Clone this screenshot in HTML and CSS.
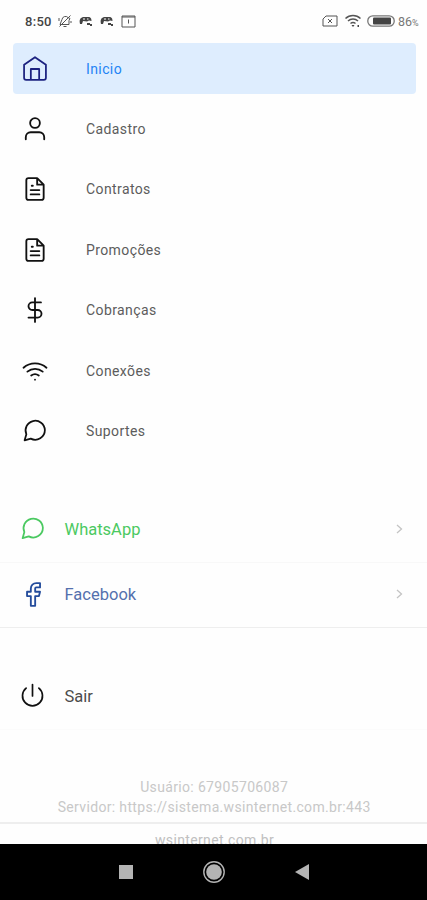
FILE: index.html
```
<!DOCTYPE html>
<html lang="pt-BR">
<head>
<meta charset="utf-8">
<title>Menu</title>
<link rel="stylesheet" href="styles.css">
</head>
<body>
<svg class="defs" width="0" height="0">
<symbol id="file" viewBox="0 0 24 24"><path d="M14 2H6a2 2 0 0 0-2 2v16a2 2 0 0 0 2 2h12a2 2 0 0 0 2-2V8z M14 2v6h6 M16 13H8 M16 17H8 M10 9H9"/></symbol>
<symbol id="chat" viewBox="0 0 24 24"><path d="M21.500 11.500a9.300 9.300 0 0 1-13.600 8.300L2 21.500l1.700-5.800A9.300 9.300 0 1 1 21.500 11.500z"/></symbol>
<symbol id="pad" viewBox="0 0 14 12"><path class="solid" d="M1 9C0 5 1 3 4 2h5c3 0 3.500 2 3.500 4l-2.500-.5-2 1-4-.5-1 3z"/><path class="eye" d="M4 4h2M8 4h1.500"/><path class="solid" d="M8 8h3v2H8zM11 9h2v2h-2z"/></symbol>
</svg>
<div class="screen">
  <header class="status">
    <span class="clock">8:50</span>
    <svg class="s-bell" viewBox="0 0 14 14"><path d="M2 10.500l2-5a3.500 3.500 0 0 1 6-2l2 1-1 2v4zM5.500 12.500h3M1.500 12.500l11-11M1 4v3M13 7v2"/></svg>
    <svg class="s-pad"><use href="#pad"/></svg>
    <svg class="s-pad"><use href="#pad"/></svg>
    <svg class="s-cal" viewBox="0 0 15 13"><path d="M1 1h13v11H1zM1 2h13M7.500 4.500v4"/></svg>
    <span class="grow"></span>
    <svg class="s-sim" viewBox="0 0 16 12"><path d="M4 1h11v10H1V4zM6 4l4 4M10 4L6 8"/></svg>
    <svg class="s-wifi" viewBox="0 0 18 14"><path d="M1.500 4.500a11 11 0 0 1 15 0M4 7a7.500 7.500 0 0 1 10 0M6.500 9.500a4 4 0 0 1 5 0"/><path class="solid" d="M7.500 11h3L9 13zM13.500 11h1.500v2h-1.500z"/></svg>
    <svg class="s-bat" viewBox="0 0 28 12"><rect x=".8" y=".8" width="26.400" height="10.400" rx="5"/><rect class="solid" x="6" y="2.500" width="18" height="7" rx="1"/></svg>
    <span class="pct">86<small>%</small></span>
  </header>
  <nav class="menu">
    <a class="item active"><svg class="icon" viewBox="-.5 0 25 25"><path d="M1.500 8.500L12 1.200 22.500 8.500V21a2 2 0 0 1-2 2h-17a2 2 0 0 1-2-2zM8 23V12.500h8V23"/></svg><span>Inicio</span></a>
    <a class="item"><svg class="icon" viewBox="0 0 24 24"><path d="M20.500 21.500V19.500a4.500 4.500 0 0 0-4.500-4.500H8a4.500 4.500 0 0 0-4.500 4.500V21.500"/><circle cx="12" cy="6.500" r="4.500"/></svg><span>Cadastro</span></a>
    <a class="item"><svg class="icon"><use href="#file"/></svg><span>Contratos</span></a>
    <a class="item"><svg class="icon"><use href="#file"/></svg><span>Promoções</span></a>
    <a class="item"><svg class="icon" viewBox="0 0 24 24"><path d="M12 1v22M17.500 5H9.500a3.500 3.500 0 0 0 0 7h5a3.500 3.500 0 0 1 0 7H6"/></svg><span>Cobranças</span></a>
    <a class="item"><svg class="icon" viewBox="0 0 24 24"><path d="M1.400 9a16 16 0 0 1 21.200 0M5 12.550a11 11 0 0 1 14.100 0M8.500 16.110a6 6 0 0 1 7 0M12 20h.01"/></svg><span>Conexões</span></a>
    <a class="item"><svg class="icon" viewBox="-.5 0 25 25"><use href="#chat" width="24" height="24"/></svg><span>Suportes</span></a>
  </nav>
  <section class="links">
    <a class="link whats"><svg class="icon" viewBox="-.5 .2 25 25"><use href="#chat" width="24" height="24"/></svg><span>WhatsApp</span><svg class="chev" viewBox="0 0 7 10"><path d="M1 1l4.500 4L1 9"/></svg></a>
    <a class="link face"><svg class="icon" viewBox="0 0.500 24 24"><path d="M18.500 1.500h-3.500a5 5 0 0 0-5 5v3H6.500v4H10v9h4v-9h3.500l1-4H14v-3a1 1 0 0 1 1-1h3.500z"/></svg><span>Facebook</span><svg class="chev" viewBox="0 0 7 10"><path d="M1 1l4.500 4L1 9"/></svg></a>
  </section>
  <a class="link exit"><svg class="icon" viewBox="-.5 -1 26 26"><path d="M18.360 4.140a10 10 0 1 1-12.730 0M12 .5v11.500"/></svg><span>Sair</span></a>
  <div class="info">
    <p class="user">Usuário: 67905706087</p>
    <p class="server">Servidor: https://sistema.wsinternet.com.br:443</p>
  </div>
  <footer class="site"><span>wsinternet.com.br</span></footer>
  <div class="softkeys">
    <svg viewBox="0 0 24 24"><path d="M5 5h14v14H5z"/></svg>
    <svg viewBox="0 0 24 24"><circle cx="12" cy="12" r="7.800"/><circle class="ring" cx="12" cy="12" r="10.200"/></svg>
    <svg viewBox="0 0 24 24"><path d="M5 12L19 4v16z"/></svg>
  </div>
</div>
</body>
</html>
```

FILE: styles.css
```
* { box-sizing: border-box; }
body { margin: 0; background: #fefefe; font-family: Roboto, "Liberation Sans", sans-serif; color: #5c5c5c; }
.defs { position: absolute; }
p { margin: 0; }
svg { display: block; flex: none; fill: none; stroke: currentColor; }
.screen { height: 900px; display: flex; flex-direction: column; overflow: hidden; }
.status { height: 43px; flex: none; display: flex; align-items: center; padding: 0 8px 1px 25px; color: #555; }
.clock { font-size: 13px; font-weight: 500; color: #444; width: 33px; letter-spacing: .3px; white-space: nowrap; }
.s-bell { width: 14px; height: 14px; margin-right: 7px; }
.s-pad { width: 14px; height: 12px; margin-right: 7px; }
.s-cal { width: 15px; height: 13px; }
.grow { flex: 1; }
.s-sim { width: 16px; height: 12px; margin-right: 6px; }
.s-wifi { width: 18px; height: 14px; margin-right: 5px; stroke-width: 1.5; }
.s-bat { width: 28px; height: 12px; margin-right: 3px; stroke: #777; stroke-width: 1.3; }
.solid { fill: #444; stroke: none; }
.eye { stroke: #fff; }
.pct { font-size: 12.500px; width: 21px; color: #777; white-space: nowrap; }
.pct small { font-size: 9px; }
.menu { flex: none; padding: .2px 11px 0 12.500px; display: flex; flex-direction: column; gap: 9.400px; }
.item { height: 51px; border-radius: 4px; display: flex; align-items: center; padding-left: 9.500px; font-size: 14px; letter-spacing: .4px; }
.icon { width: 26px; height: 26px; color: #111; stroke-width: 1.700; stroke-linecap: round; stroke-linejoin: round; }
.item span { margin-left: 38px; }
.active { background: #deedfe; color: #2384f5; }
.active .icon { color: #1c2280; }
.links { margin-top: 40.400px; flex: none; }
.link { height: 66px; display: flex; align-items: center; padding: 0 24px 0 20px; font-size: 16.500px; border-bottom: 1px solid #f8f8f8; }
.link span { flex: 1; margin-left: 18.500px; }
.link.face { height: 65px; border-bottom: 1px solid #eee; }
.whats, .whats .icon { color: #4bc961; }
.face { color: #5470ad; }
.face .icon { color: #244c9c; }
.chev { width: 7px; height: 10px; margin-bottom: 1px; stroke: #c4c4c4; stroke-width: 1.300; }
.exit { flex: none; margin-top: 36px; color: #4c4c4c; border-bottom-color: #fbfbfb; }
.info { margin-top: 47px; flex: none; text-align: center; font-size: 14px; letter-spacing: .34px; line-height: 20px; color: #c8c8c8; height: 45px; padding-left: 1.400px; }
.site { height: 22px; flex: none; overflow: hidden; border-top: 2px solid #eee; text-align: center; font-size: 14px; letter-spacing: .36px; line-height: 20px; padding: 6px 0 0 2px; color: #c0c0c0; }
.softkeys { flex: 1; background: #000; display: flex; justify-content: center; align-items: center; gap: 64px; }
.softkeys svg { width: 24px; height: 24px; fill: #b4b4b4; stroke: none; }
.softkeys .ring { fill: none; stroke: #b4b4b4; stroke-width: 1.400; }
```
